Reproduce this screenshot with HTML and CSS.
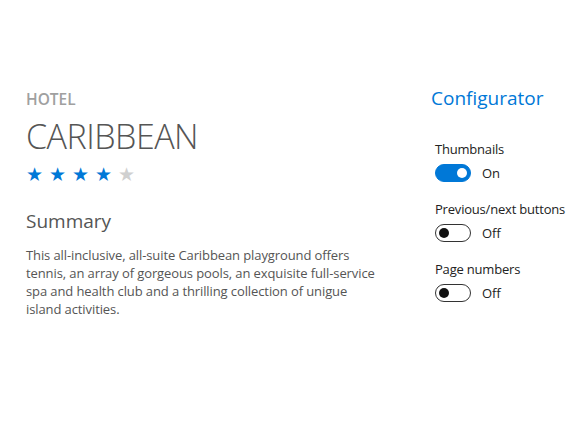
FILE: index.html
```html
<!DOCTYPE html>
<html lang="en">
<head>
    <meta charset="UTF-8">
    <meta name="viewport" content="width=device-width, initial-scale=1.0">
    <title>Hotel Caribbean</title>
    <link rel="stylesheet" href="styles.css">
</head>
<body>

<div class="page">
    <!-- ===== HOTEL DETAILS ===== -->
    <div class="details">
        <div class="kicker">HOTEL</div>
        <h1 class="title">CARIBBEAN</h1>
        <div class="stars">
            <span class="star on">★</span>
            <span class="star on">★</span>
            <span class="star on">★</span>
            <span class="star on">★</span>
            <span class="star">★</span>
        </div>
        <h2 class="section">Summary</h2>
        <p class="summary">This all-inclusive, all-suite Caribbean playground offers tennis, an array of gorgeous pools, an exquisite full-service spa and health club and a thrilling collection of unigue island activities.</p>
    </div>

    <!-- ===== CONFIGURATOR ===== -->
    <div class="config">
        <h2 class="config-title">Configurator</h2>
        <div class="option">
            <div class="option-label">Thumbnails</div>
            <div class="toggle-row">
                <span class="toggle on"><span class="knob"></span></span>
                <span class="state">On</span>
            </div>
        </div>
        <div class="option">
            <div class="option-label">Previous/next buttons</div>
            <div class="toggle-row">
                <span class="toggle"><span class="knob"></span></span>
                <span class="state">Off</span>
            </div>
        </div>
        <div class="option">
            <div class="option-label">Page numbers</div>
            <div class="toggle-row">
                <span class="toggle"><span class="knob"></span></span>
                <span class="state">Off</span>
            </div>
        </div>
    </div>
</div>

</body>
</html>
```

FILE: styles.css
```css
:root {
    --text: #555555;
    --muted: #a0a0a0;
    --accent: #0078d7;
    --font-family: "Open Sans", "Noto Sans", sans-serif;
}
body {
    font-family: var(--font-family);
    background-color: #ffffff;
    color: var(--text);
    margin: 0;
}
.page {
    display: flex;
    padding: 84px 0 0 26px;
}
.details {
    width: 355px;
    padding-top: 5px;
}
.kicker {
    color: var(--muted);
    font-size: 15.5px;
    font-weight: 600;
    line-height: 20px;
}
.title {
    margin: 5px 0 0;
    font-size: 34px;
    font-weight: 300;
    line-height: 44px;
    letter-spacing: -0.5px;
}
.stars {
    display: flex;
    gap: 6px;
    margin-top: 5px;
    font-size: 19px;
    line-height: 22px;
    color: #d0d0d0;
}
.star.on {
    color: var(--accent);
}
.section {
    margin: 23px 0 0;
    font-size: 19px;
    font-weight: 400;
    line-height: 26px;
}
.summary {
    margin: 12px 0 0;
    font-size: 13px;
    line-height: 18px;
    letter-spacing: -0.1px;
}
.config {
    margin-left: 50px;
}
.config-title {
    margin: 0;
    color: var(--accent);
    font-size: 19px;
    font-weight: 400;
    line-height: 28px;
}
.option {
    padding-left: 4px;
}
.config-title + .option {
    margin-top: 27px;
}
.option + .option {
    margin-top: 16px;
}
.option-label {
    font-size: 13px;
    line-height: 20px;
    letter-spacing: -0.2px;
    color: #222222;
}
.toggle-row {
    display: flex;
    align-items: center;
    gap: 11px;
    margin-top: 4px;
}
.toggle {
    display: flex;
    align-items: center;
    box-sizing: border-box;
    width: 36px;
    height: 18px;
    border: 1.5px solid #333333;
    border-radius: 9px;
    padding: 0 3px;
}
.knob {
    width: 10px;
    height: 10px;
    border-radius: 50%;
    background-color: #111111;
}
.toggle.on {
    background-color: var(--accent);
    border-color: var(--accent);
    justify-content: flex-end;
}
.toggle.on .knob {
    background-color: #ffffff;
}
.state {
    font-size: 13px;
    line-height: 20px;
    color: #222222;
}
```
